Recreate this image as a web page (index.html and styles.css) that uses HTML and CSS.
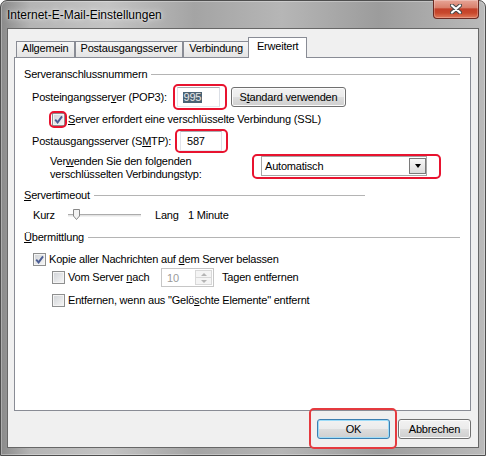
FILE: index.html
```html
<!DOCTYPE html>
<html lang="de">
<head>
  <meta charset="UTF-8" />
  <meta name="viewport" content="width=device-width, initial-scale=1.0" />
  <title>Internet-E-Mail-Einstellungen</title>
  <link rel="stylesheet" href="styles.css">
</head>
<body>
  <div class="window">
    <div class="titlebar">
      <span class="caption">Internet-E-Mail-Einstellungen</span>
      <button class="close" type="button" aria-label="Schließen">
        <svg width="12" height="10" viewBox="0 0 12 10">
          <path d="M2 1.5 L10 8.5 M10 1.5 L2 8.5" stroke="#4a4a4a" stroke-width="4.2" stroke-linecap="round"/>
          <path d="M2 1.5 L10 8.5 M10 1.5 L2 8.5" stroke="#fff" stroke-width="2.2" stroke-linecap="round"/>
        </svg>
      </button>
    </div>

    <div class="client">
      <div class="tabs">
        <div class="tab">Allgemein</div>
        <div class="tab">Postausgangsserver</div>
        <div class="tab">Verbindung</div>
        <div class="tab active">Erweitert</div>
      </div>

      <div class="panel">
        <!-- Serveranschlussnummern -->
        <div class="group-title">Serveranschlussnummern</div>

        <div class="row field-row row-pop">
          <span class="field-label">Posteingangsser<u>v</u>er (POP3):</span>
          <span class="mark mark-pop">
            <span class="textbox textbox-pop"><span class="selected">995</span></span>
          </span>
          <button class="btn btn-std" type="button">S<u>t</u>andard verwenden</button>
        </div>

        <div class="row indent-row row-ssl">
          <span class="mark mark-ssl">
            <span class="check">
              <svg viewBox="0 0 11 11" width="11" height="11"><path d="M2.2 5.6 L4.6 8.4 L9 2.4" fill="none" stroke="#4b5d94" stroke-width="1.9"/></svg>
            </span>
          </span>
          <span class="check-text"><u>S</u>erver erfordert eine verschlüsselte Verbindung (SSL)</span>
        </div>

        <div class="row field-row row-smtp">
          <span class="field-label label-smtp">Postausgangsserver (S<u>M</u>TP):</span>
          <span class="mark mark-smtp">
            <span class="textbox textbox-smtp">587</span>
          </span>
        </div>

        <div class="row conn-row">
          <span class="conn-label">Ver<u>w</u>enden Sie den folgenden<br>verschlüsselten Verbindungstyp:</span>
          <span class="mark mark-combo">
            <span class="combo">
              <span>Automatisch</span>
              <span class="combo-arrow"></span>
            </span>
          </span>
        </div>

        <!-- Servertimeout -->
        <div class="group-title short"><span><u>S</u>ervertimeout</span></div>

        <div class="row sub-row slider-row">
          <span class="slider-label">Kurz</span>
          <span class="slider">
            <svg class="thumb" width="7" height="11" viewBox="0 0 7 11">
              <path d="M0.5 0.5 H6.5 V7 L3.5 10.5 L0.5 7 Z" fill="#f3f3f3" stroke="#878787"/>
            </svg>
          </span>
          <span class="slider-end">Lang</span>
          <span>1 Minute</span>
        </div>

        <!-- Übermittlung -->
        <div class="group-title"><span><u>Ü</u>bermittlung</span></div>

        <div class="row sub-row row-copy">
          <span class="check">
            <svg viewBox="0 0 11 11" width="11" height="11"><path d="M2.2 5.6 L4.6 8.4 L9 2.4" fill="none" stroke="#4b5d94" stroke-width="1.9"/></svg>
          </span>
          <span class="check-text">Kopie aller Nachrichten auf <u>d</u>em Server belassen</span>
        </div>

        <div class="row indent-row row-days">
          <span class="days-label">
            <span class="check"></span>
            <span class="check-text">Vom Server <u>n</u>ach</span>
          </span>
          <span class="spin">
            <span class="spin-value">10</span>
            <span class="spin-buttons">
              <span class="spin-up"></span>
              <span class="spin-down"></span>
            </span>
          </span>
          <span class="days-text">Tagen entfernen</span>
        </div>

        <div class="row indent-row row-deleted">
          <span class="check"></span>
          <span class="check-text">Entfernen, wenn aus "Gelö<u>s</u>chte Elemente" entfernt</span>
        </div>
      </div>

      <div class="actions">
        <span class="mark mark-ok">
          <button class="btn btn-default" type="button">OK</button>
        </span>
        <button class="btn" type="button">Abbrechen</button>
      </div>
    </div>
  </div>
</body>
</html>
```

FILE: styles.css
```css
body {
  margin: 0;
  background: #fff;
  font-family: "Liberation Sans", Arial, sans-serif;
  font-size: 11px;
  letter-spacing: -0.2px;
  color: #000;
}

button {
  font: inherit;
  letter-spacing: inherit;
  color: inherit;
}

u {
  text-decoration-thickness: 1px;
}

/* window frame */

.window {
  width: 486px;
  height: 456px;
  box-sizing: border-box;
  display: flex;
  flex-direction: column;
  padding: 0 6px 7px;
  border: 1px solid #4e4e4e;
  border-radius: 7px 7px 0 0;
  background: linear-gradient(90deg, #8a8a8a 0%, #b4b4b4 6%, #c4c4c4 22%, #a4a4a4 40%, #b6b6b6 58%, #9c9c9c 78%, #bababa 100%);
  box-shadow: inset 0 0 0 1px rgba(255,255,255,0.3);
}

.titlebar {
  height: 27px;
  display: flex;
  justify-content: space-between;
  align-items: flex-start;
}

.caption {
  font-size: 12px;
  line-height: 14px;
  letter-spacing: 0;
  padding-top: 7px;
  text-shadow: 0 0 6px rgba(255,255,255,0.9), 0 0 2px rgba(255,255,255,0.7);
}

.close {
  width: 46px;
  height: 19px;
  margin-top: -1px;
  padding: 0;
  border: 1px solid #6b2a22;
  border-top: 0;
  border-radius: 0 0 4px 4px;
  background: linear-gradient(#e7a597 0%, #d9806c 42%, #c3402a 50%, #c8482c 72%, #e07a5c 100%);
  box-shadow: inset 0 0 0 1px rgba(255,255,255,0.25);
  display: flex;
  align-items: center;
  justify-content: center;
}

.client {
  flex: 1;
  display: flex;
  flex-direction: column;
  padding: 8px 7px 8px 6px;
  border: 1px solid #676767;
  background: #f0f0f0;
}

/* tabs */

.tabs {
  display: flex;
  align-items: flex-end;
  height: 20px;
  margin-left: 2px;
  position: relative;
  z-index: 1;
}

.tab {
  height: 16px;
  box-sizing: border-box;
  padding: 0 5px;
  border: 1px solid #898c95;
  border-bottom: 0;
  line-height: 13px;
  white-space: nowrap;
  background: linear-gradient(#f6f6f6, #e4e4e4);
}

.tab.active {
  height: 21px;
  margin: 0 -2px -1px -1px;
  padding: 1px 8px 0;
  line-height: 15px;
  background: #fff;
}

.panel {
  flex: 1;
  padding-top: 10px;
  border: 1px solid #898c95;
  background: #fff;
}

/* group headings with the line after them */

.group-title {
  display: flex;
  align-items: center;
  gap: 4px;
  height: 13px;
  line-height: 13px;
  margin: 0 10px 0 9px;
  white-space: nowrap;
}

.group-title::after {
  content: "";
  flex: 1;
  border-top: 1px solid #b4b4b4;
}

.group-title.short {
  margin-top: 8px;
  margin-right: 105px;
}

.row {
  display: flex;
  align-items: center;
  line-height: 13px;
  white-space: nowrap;
}

.field-row { padding-left: 17px; height: 20px; }
.indent-row { padding-left: 37px; height: 13px; }
.sub-row { padding-left: 18px; height: 13px; }

.row-pop { margin-top: 6px; }
.row-ssl { margin-top: 6px; }
.row-smtp { margin-top: 5px; }
.slider-row { margin-top: 7px; }
.slider-row + .group-title { margin-top: 9px; }
.row-copy { margin-top: 9px; }
.row-days { margin-top: 2px; height: 19px; }
.row-deleted { margin-top: 7px; }

.field-label { width: 145px; }
.label-smtp { width: 148px; }

/* text boxes */

.textbox {
  display: flex;
  align-items: center;
  height: 20px;
  box-sizing: border-box;
  border: 1px solid;
  border-color: #abadb3 #dbdfe6 #e3e9ef #e2e3ea;
  background: #fff;
}

.textbox-pop { width: 43px; padding-left: 5px; }
.textbox-smtp { width: 42px; padding-left: 6px; }

.selected {
  background: #4a6374;
  color: #e8e8e8;
  line-height: 11px;
  padding: 0 0.5px;
}

/* buttons */

.btn {
  height: 20px;
  padding: 0;
  box-sizing: border-box;
  border: 1px solid #707070;
  border-radius: 3px;
  background: linear-gradient(#f2f2f2 0%, #ebebeb 50%, #dddddd 51%, #cfcfcf 100%);
  box-shadow: inset 0 0 0 1px #fbfbfb;
  width: 73px;
}

.btn-std {
  width: 115px;
  margin-left: 11px;
}

.btn-default {
  border-color: #3c7fb1;
  box-shadow: inset 0 0 0 1px #9ddcf8;
}

.actions {
  display: flex;
  justify-content: flex-end;
  gap: 8px;
  margin-top: 8px;
}

/* checkboxes */

.check {
  width: 13px;
  height: 13px;
  box-sizing: border-box;
  border: 1px solid #8e8f8f;
  background: linear-gradient(135deg, #cfd2d6, #f7f7f7);
  box-shadow: inset 0 0 0 1px #f4f4f4;
  display: inline-flex;
  align-items: center;
  justify-content: center;
  flex: none;
}

.check-text { margin-left: 3px; }

/* connection type */

.conn-row {
  align-items: flex-start;
  margin-top: 3px;
  padding-left: 35px;
}

.conn-label {
  width: 211px;
  padding-top: 1px;
}

.combo {
  width: 166px;
  height: 20px;
  box-sizing: border-box;
  margin-top: 2px;
  padding-left: 3px;
  border: 1px solid #a5a5a5;
  background: #fff;
  display: flex;
  align-items: center;
  justify-content: space-between;
}

.combo-arrow {
  width: 17px;
  height: 16px;
  box-sizing: border-box;
  border: 1px solid #7a7a7a;
  background: linear-gradient(#f7f7f7, #dcdcdc);
  display: flex;
  align-items: center;
  justify-content: center;
}

.combo-arrow::after {
  content: "";
  border-left: 3.5px solid transparent;
  border-right: 3.5px solid transparent;
  border-top: 4px solid #000;
}

/* slider */

.slider-label { width: 35px; }
.slider-end { width: 33px; margin-left: 14px; }

.slider {
  position: relative;
  width: 73px;
  height: 3px;
  box-sizing: border-box;
  border-top: 1px solid #acacac;
  border-bottom: 1px solid #f2f2f2;
  background: #e4e4e4;
}

.thumb {
  position: absolute;
  left: 5px;
  top: -6px;
}

/* days spin box (disabled) */

.days-label {
  display: flex;
  align-items: center;
  width: 109px;
}

.spin {
  width: 53px;
  height: 19px;
  box-sizing: border-box;
  border: 1px solid #c6c6c6;
  background: #fff;
  display: flex;
  align-items: center;
  justify-content: space-between;
  padding: 1px 1px 1px 5px;
  color: #9a9a9a;
}

.spin-value { padding-top: 2px; }

.spin-buttons {
  display: flex;
  flex-direction: column;
  width: 17px;
  height: 15px;
}

.spin-up,
.spin-down {
  flex: 1;
  border: 1px solid #d8d8d8;
  background: #f4f4f4;
  display: flex;
  align-items: center;
  justify-content: center;
}

.spin-down { border-top: 0; }

.spin-up::after {
  content: "";
  border-left: 3px solid transparent;
  border-right: 3px solid transparent;
  border-bottom: 3px solid #b4b4b4;
}

.spin-down::after {
  content: "";
  border-left: 3px solid transparent;
  border-right: 3px solid transparent;
  border-top: 3px solid #b4b4b4;
}

.days-text { margin-left: 8px; }

/* red annotation frames drawn over the screenshot */

.mark {
  position: relative;
  display: inline-flex;
}

.mark::after {
  content: "";
  position: absolute;
  border: 2px solid #e8132f;
  border-radius: 5px;
  pointer-events: none;
}

.mark-pop::after { top: -3px; left: -4px; right: -7px; bottom: -3px; }
.mark-ssl::after { top: -2px; left: -3px; right: -2px; bottom: -2px; }
.mark-smtp::after { top: -2px; left: -5px; right: -6px; bottom: -2px; }
.mark-combo::after { top: 0; left: -9px; right: -14px; bottom: -3px; }
.mark-ok::after { top: -11px; left: -8px; right: -7px; bottom: -10px; border-color: #e53a3f; }
```
